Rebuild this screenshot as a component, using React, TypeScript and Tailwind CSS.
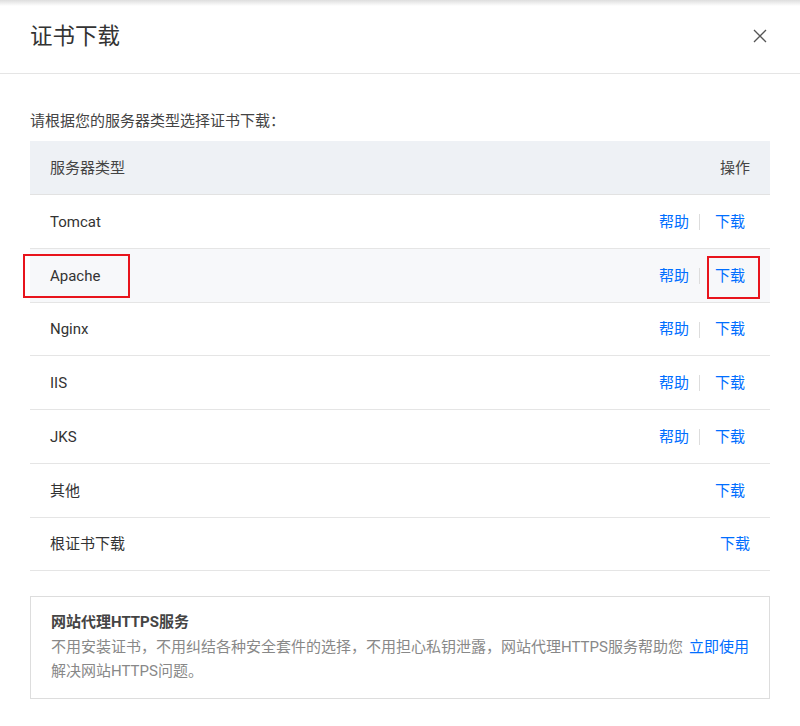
import React from "react";

const rows: { name: string; help: boolean; last?: boolean; hover?: boolean; h: string }[] = [
  { name: "Tomcat", help: true, h: "h-[54px]" },
  { name: "Apache", help: true, hover: true, h: "h-[54px]" },
  { name: "Nginx", help: true, h: "h-[53px]" },
  { name: "IIS", help: true, h: "h-[54px]" },
  { name: "JKS", help: true, h: "h-[54px]" },
  { name: "其他", help: false, h: "h-[54px]" },
  { name: "根证书下载", help: false, last: true, h: "h-[53px]" },
];

export default function App() {
  return (
    <div
      className="relative w-[800px] h-[726px] overflow-hidden bg-white text-[#333]"
      style={{ fontFamily: 'Roboto, "Noto Sans CJK SC", sans-serif' }}
    >
      <div className="h-[6px] bg-gradient-to-b from-[#dedede] to-white" />
      <div className="h-[68px] flex items-center justify-between pl-[30px] pr-[33px] pb-[8px] border-b border-[#e5e5e5]">
        <div className="text-[22.5px] leading-[30px] text-[#333]">证书下载</div>
        <svg width="14" height="14" viewBox="0 0 14 14" className="text-[#555]">
          <path d="M1 1 L13 13 M13 1 L1 13" stroke="currentColor" strokeWidth="1.3" fill="none" />
        </svg>
      </div>
      <div className="px-[30px] text-[15px]">
        <div className="pt-[37px] leading-[20px] text-[#444]">请根据您的服务器类型选择证书下载：</div>
        <div className="mt-[10px]">
          <div className="h-[54px] pt-[1px] flex items-center justify-between bg-[#eef1f5] border-b border-[#e2e2e2] pl-[20px] pr-[20px] text-[#444]">
            <span>服务器类型</span>
            <span>操作</span>
          </div>
          {rows.map((r) => (
            <div
              key={r.name}
              className={
                r.h +
                " pt-[1px] flex items-center justify-between border-b border-[#e5e5e5] pl-[20px] " +
                (r.last ? "pr-[20px] " : "pr-[25px] ") +
                (r.hover ? "bg-[#f7f8fa]" : "bg-white")
              }
            >
              <span className="text-[#333]">{r.name}</span>
              <div className="flex items-center text-[#006eff]">
                {r.help && (
                  <>
                    <span>帮助</span>
                    <span className="mx-[10px] w-px h-[16px] bg-[#dddddd]" />
                    <span className="ml-[5px]">下载</span>
                  </>
                )}
                {!r.help && <span>下载</span>}
              </div>
            </div>
          ))}
        </div>
        <div className="mt-[25px] border border-[#dddddd] pl-[20px] pr-[20px] pt-[15px] pb-[15px]">
          <div className="leading-[20px] font-bold text-[#444]">网站代理HTTPS服务</div>
          <div className="mt-[3px] flex items-start">
            <p className="flex-1 leading-[24px] text-[#888]">
              不用安装证书，不用纠结各种安全套件的选择，不用担心私钥泄露，网站代理HTTPS服务帮助您解决网站HTTPS问题。
            </p>
            <span className="ml-[4px] shrink-0 leading-[24px] text-[#006eff]">立即使用</span>
          </div>
        </div>
      </div>
      <div className="absolute left-[23px] top-[254px] w-[107px] h-[44px] border-2 border-[#e8141c]" />
      <div className="absolute left-[707px] top-[256px] w-[53px] h-[43px] border-2 border-[#e8141c]" />
    </div>
  );
}
